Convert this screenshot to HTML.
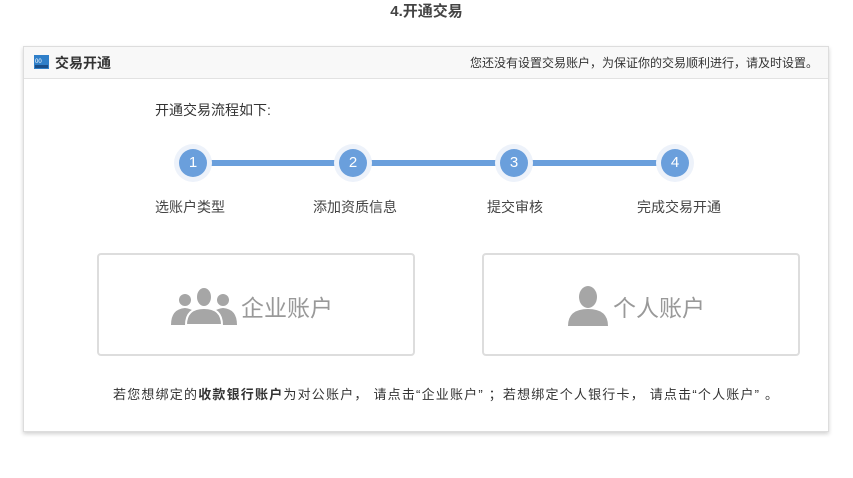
<!DOCTYPE html>
<html><head><meta charset="utf-8"><style>
body{margin:0;width:853px;height:478px;background:#fff;font-family:"Liberation Sans","Noto Sans CJK SC",sans-serif;position:relative;overflow:hidden;color:#333}
.a{position:absolute;white-space:nowrap}
.panel{position:absolute;left:23px;top:46px;width:804px;height:384px;border:1px solid #ddd;box-shadow:0 2px 4px rgba(0,0,0,.18);background:#fff}
.hd{position:absolute;left:0;top:0;width:804px;height:31px;background:#f8f8f8;border-bottom:1px solid #e2e2e2}
.c{position:absolute;width:28px;height:28px;border-radius:50%;background:#6a9fdc;color:#fff;font-size:15px;line-height:28px;text-align:center;box-shadow:0 0 0 5px #edf2fa}
.box{position:absolute;top:253px;width:314px;height:99px;border:2px solid #ddd;border-radius:4px;background:#fff}
.lb{font-size:14px;color:#444}
</style></head><body>
<div class="a" style="left:0;width:853px;top:0px;text-align:center;font-size:15px;font-weight:bold;color:#444">4.开通交易</div>
<div class="panel">
<div class="hd">
<svg class="a" style="left:10px;top:8px" width="15" height="14"><rect width="15" height="14" fill="#2f7fc9"/><rect x="1" y="10" width="13" height="3" fill="#1a4f8a"/><text x="1" y="8" font-size="6" fill="#fff">00</text></svg>
<div class="a" style="left:31px;top:6px;font-size:14px;font-weight:bold;color:#333">交易开通</div>
<div class="a" style="right:10px;top:7px;font-size:12px;color:#333">您还没有设置交易账户，为保证你的交易顺利进行，请及时设置。</div>
</div>
</div>
<div class="a" style="left:155px;top:100px;font-size:14px;color:#333">开通交易流程如下:</div>
<div class="a" style="left:193px;top:160px;width:482px;height:6px;background:#6a9fdc"></div>
<div class="c" style="left:179px;top:149px">1</div>
<div class="c" style="left:339px;top:149px">2</div>
<div class="c" style="left:500px;top:149px">3</div>
<div class="c" style="left:661px;top:149px">4</div>
<div class="a lb" style="left:155px;top:197px">选账户类型</div>
<div class="a lb" style="left:313px;top:197px">添加资质信息</div>
<div class="a lb" style="left:487px;top:197px">提交审核</div>
<div class="a lb" style="left:637px;top:197px">完成交易开通</div>
<div class="box" style="left:97px">
<svg class="a" style="left:72px;top:32px" width="66" height="38" fill="#a6a6a6">
<circle cx="14" cy="13" r="6"/><path d="M0 38 Q0 22 14 21 Q24 22 26 30 L26 38Z"/>
<circle cx="52" cy="13" r="6"/><path d="M66 38 Q66 22 52 21 Q42 22 40 30 L40 38Z"/>
<ellipse cx="33" cy="10" rx="8" ry="10" stroke="#fff" stroke-width="2"/><path d="M15 38 Q15 21 33 21 Q51 21 51 38Z" stroke="#fff" stroke-width="2"/>
</svg>
<div class="a" style="left:142px;top:34px;font-size:23px;color:#999">企业账户</div>
</div>
<div class="box" style="left:482px">
<svg class="a" style="left:84px;top:31px" width="40" height="40" fill="#a6a6a6">
<ellipse cx="20" cy="11" rx="9" ry="11"/><path d="M0 40 Q0 23 20 23 Q40 23 40 40Z"/>
</svg>
<div class="a" style="left:129px;top:34px;font-size:23px;color:#999">个人账户</div>
</div>
<div class="a" style="left:113px;top:384px;font-size:13px;color:#333;letter-spacing:1.2px">若您想绑定的<b>收款银行账户</b>为对公账户<span style="letter-spacing:6px">，</span>请点击“企业账户”&nbsp;；若想绑定个人银行卡<span style="letter-spacing:6px">，</span>请点击“个人账户”&nbsp;。</div>
</body></html>
